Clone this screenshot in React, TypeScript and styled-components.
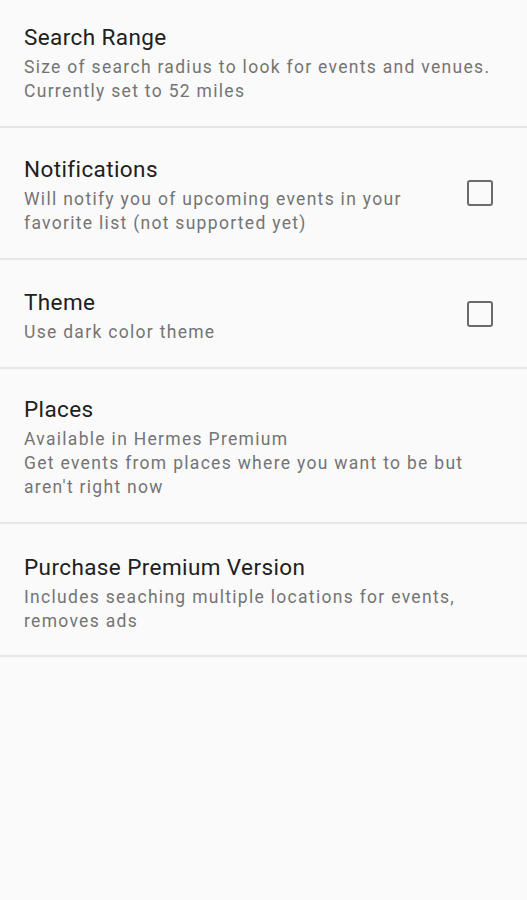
import React from "react";
import styled, { createGlobalStyle } from "styled-components";

const Global = createGlobalStyle`
  html, body { margin: 0; padding: 0; background: #fafafa; }
  body { font-family: Roboto, "Noto Sans", sans-serif; -webkit-font-smoothing: antialiased; }
`;

const Screen = styled.div`
  width: 527px;
  min-height: 900px;
  background: #fafafa;
  display: flex;
  flex-direction: column;
`;

const Row = styled.div<{ $h: number }>`
  display: flex;
  align-items: center;
  height: ${(p) => p.$h}px;
  box-sizing: border-box;
  padding: 0 34px 0 24px;
  border-bottom: 2px solid #e6e6e6;
`;

const Texts = styled.div<{ $top: number }>`
  flex: 1;
  align-self: flex-start;
  display: flex;
  flex-direction: column;
  padding-top: ${(p) => p.$top}px;
`;

const Title = styled.div`
  font-size: 22.5px;
  line-height: 28px;
  letter-spacing: 0.4px;
  color: #202020;
`;

const Summary = styled.div`
  font-size: 17.5px;
  line-height: 24px;
  letter-spacing: 1.3px;
  color: #747474;
  margin-top: 4px;
`;

const Box = styled.div`
  width: 22px;
  height: 22px;
  border: 2px solid #6b6b6b;
  border-radius: 3px;
  flex: none;
  margin-left: 16px;
`;

type Item = { title: string; lines: string[]; h: number; top: number; check?: boolean };

const items: Item[] = [
  { title: "Search Range", lines: ["Size of search radius to look for events and venues.", "Currently set to 52 miles"], h: 128, top: 23 },
  { title: "Notifications", lines: ["Will notify you of upcoming events in your", "favorite list (not supported yet)"], h: 132, top: 27, check: true },
  { title: "Theme", lines: ["Use dark color theme"], h: 109, top: 28, check: true },
  { title: "Places", lines: ["Available in Hermes Premium", "Get events from places where you want to be but", "aren't right now"], h: 155, top: 26 },
  { title: "Purchase Premium Version", lines: ["Includes seaching multiple locations for events,", "removes ads"], h: 133, top: 29 },
];

export default function App() {
  return (
    <Screen>
      <Global />
      {items.map((it) => (
        <Row key={it.title} $h={it.h}>
          <Texts $top={it.top}>
            <Title>{it.title}</Title>
            <Summary>
              {it.lines.map((l, i) => (
                <div key={i}>{l}</div>
              ))}
            </Summary>
          </Texts>
          {it.check && <Box />}
        </Row>
      ))}
    </Screen>
  );
}
